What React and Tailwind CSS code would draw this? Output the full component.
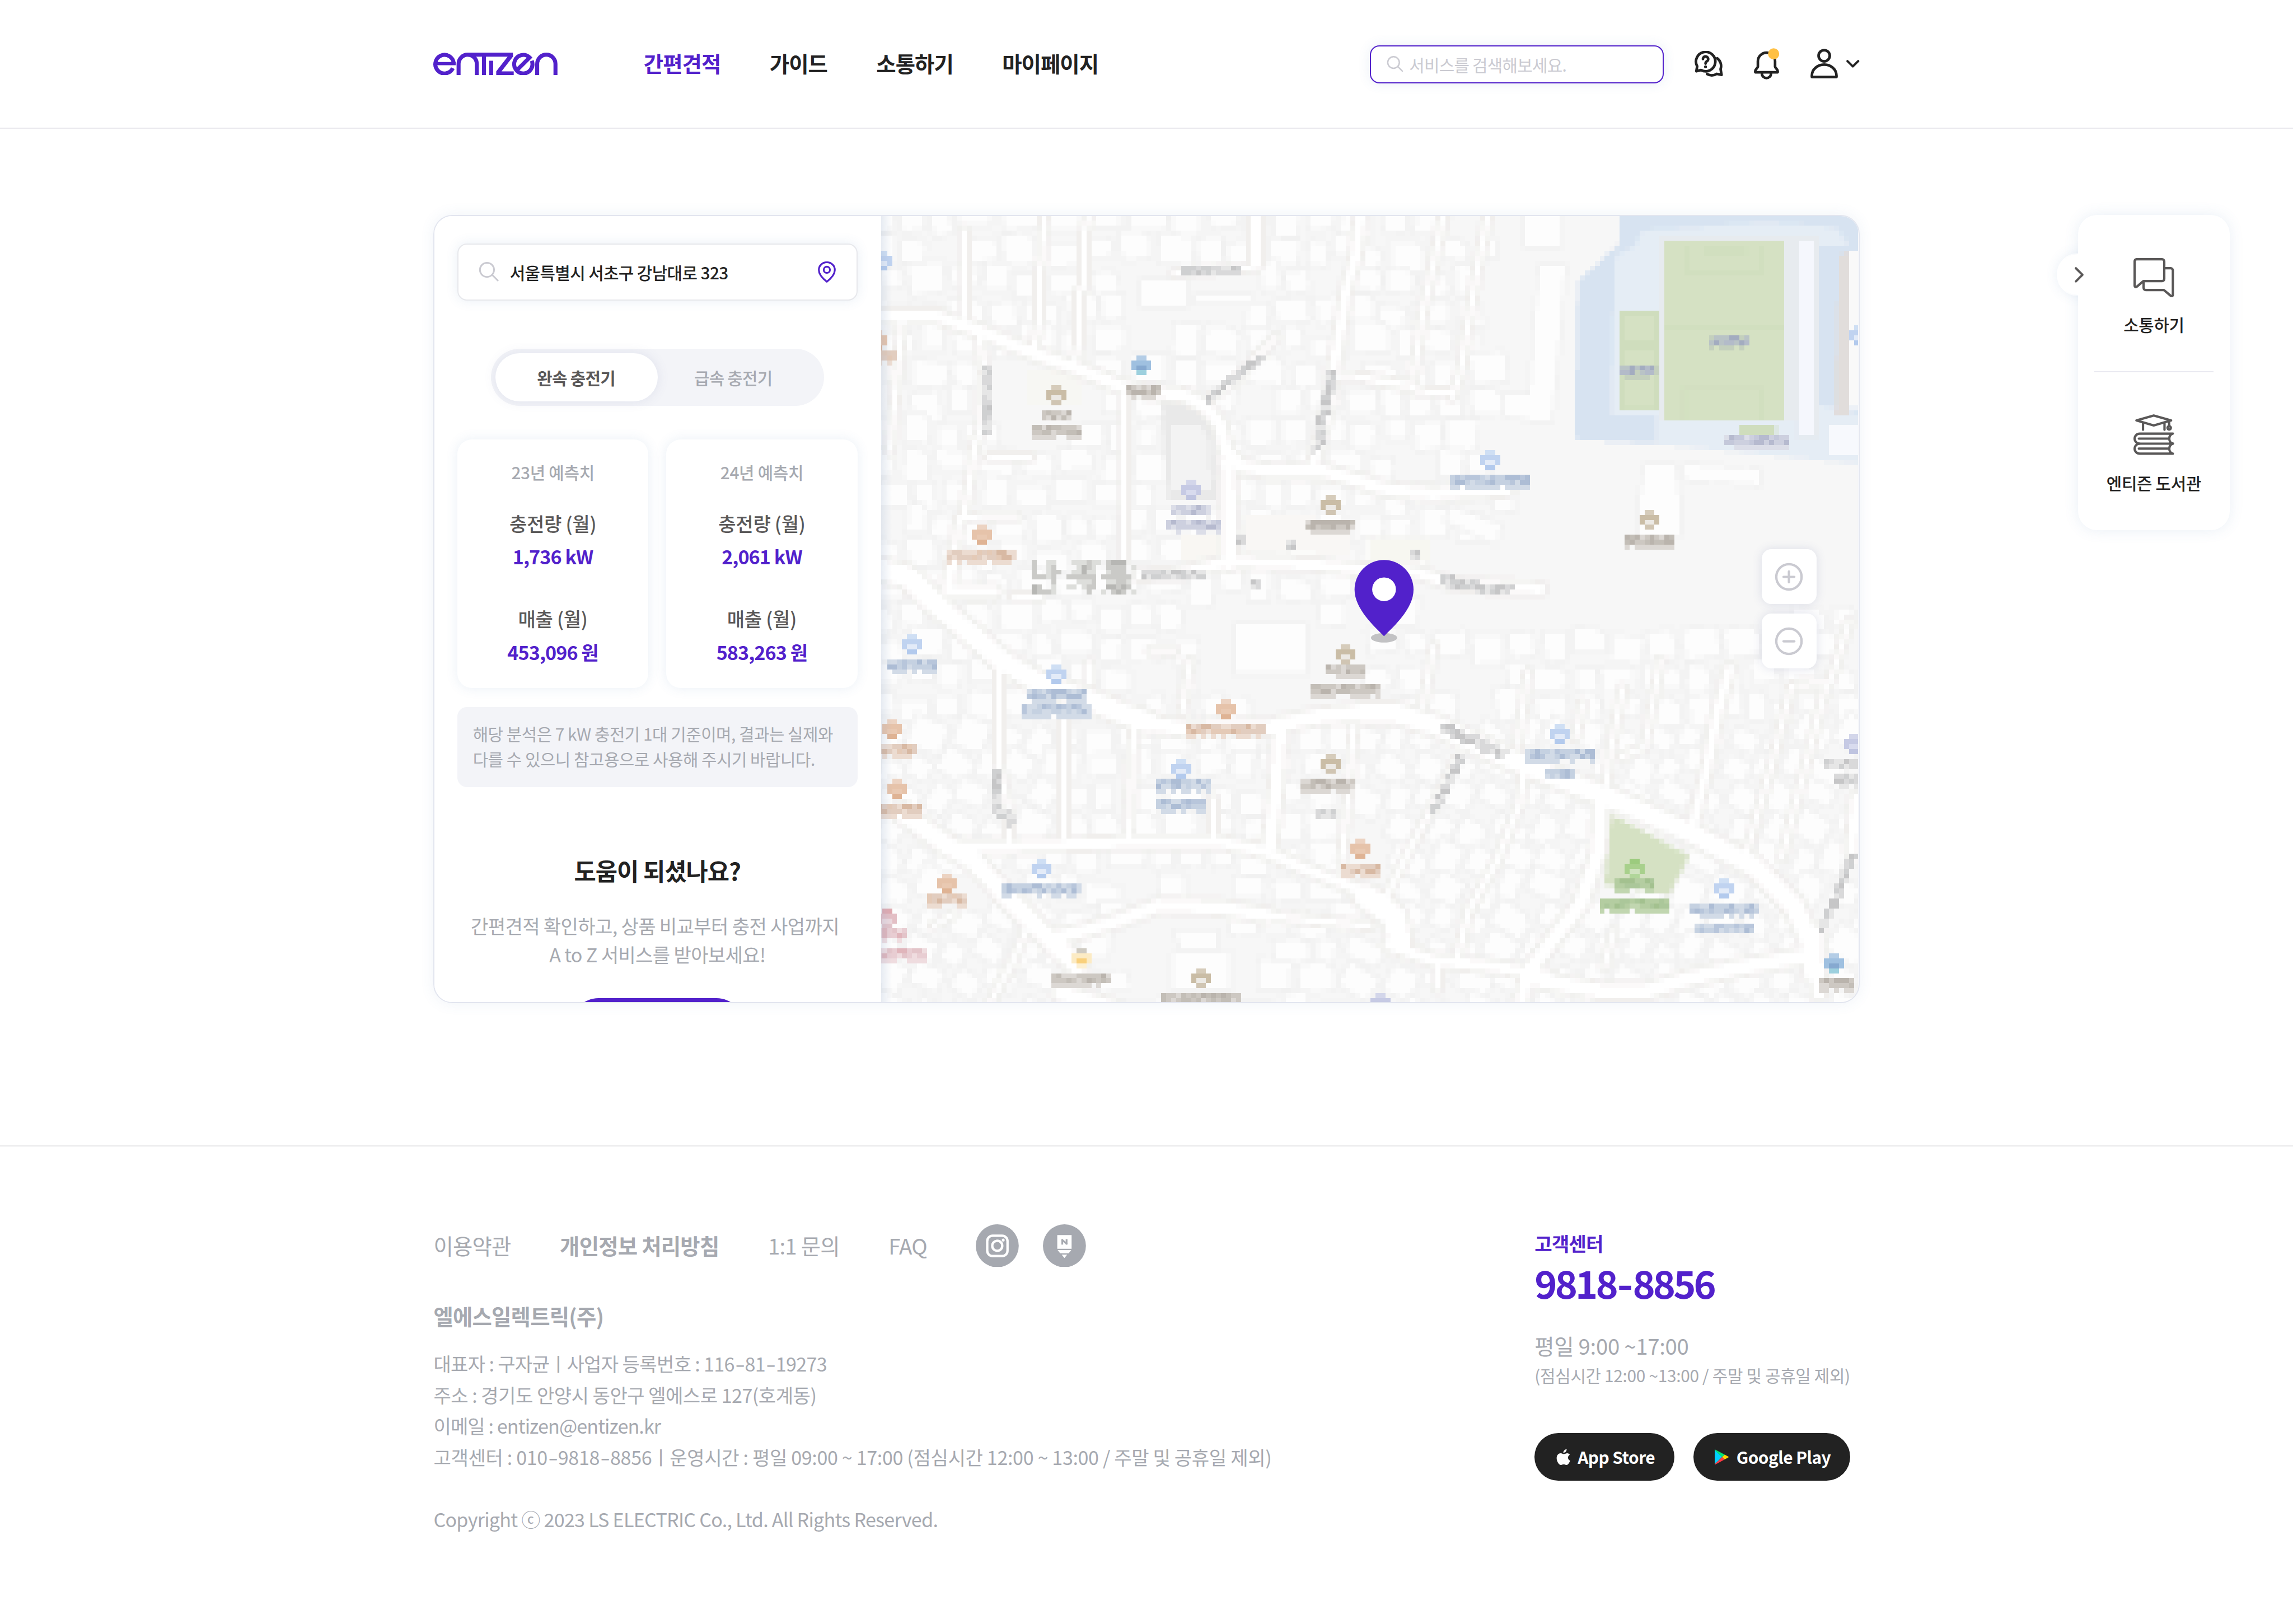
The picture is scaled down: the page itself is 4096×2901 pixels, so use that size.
import React, { useMemo } from "react";

/* ------------------------------------------------------------------ */
/* Map: a coarse mosaic of square cells, painted from vector features  */
/* ------------------------------------------------------------------ */

const COLS = 198;
const ROWS = 159;
const SUB = 3;

// Each survey sheet has its own coordinates; these turn them into cells.
const SHEETS = {
  nw: { ox: -0.31, sx: 15.83, oy: -1.786 },
  ne: { ox: 98.75, sx: 15.578, oy: -1.786 },
  sw: { ox: -0.31, sx: 15.83, oy: 78.91 },
  se: { ox: 98.75, sx: 15.578, oy: 78.91 },
};
const toCell = (sheet, [x, y]) => {
  const s = SHEETS[sheet];
  return [s.ox + x / s.sx, s.oy + y / 19.43];
};

const hex = (c) => [1, 3, 5].map((i) => parseInt(c.slice(i, i + 2), 16));

const ROADS = [
  ["nw", 2.3, [[0, 425], [190, 425], [320, 480], [500, 570], [640, 630], [790, 705], [860, 720], [980, 735], [1050, 780], [1095, 850], [1112, 950], [1160, 1010], [1250, 1030], [1420, 1030], [1568, 1078]]],
  ["ne", 2.3, [[0, 1085], [80, 1105], [200, 1118], [300, 1108], [430, 1100]]],
  ["nw", 2.6, [[1120, 990], [1125, 1390]]],
  ["nw", 1.1, [[283, 95], [283, 430]]],
  ["nw", 1.1, [[535, 30], [530, 200], [520, 240], [520, 440], [500, 570]]],
  ["nw", 1.1, [[678, 30], [662, 100], [662, 310], [647, 330], [645, 540], [630, 610]]],
  ["nw", 2, [[1208, 30], [1208, 225]]],
  ["nw", 1, [[1190, 238], [1100, 243], [950, 258]]],
  ["nw", 1.9, [[1542, 30], [1525, 200], [1495, 320], [1475, 480], [1455, 620], [1440, 760], [1390, 1010]]],
  ["nw", 1.1, [[790, 740], [790, 1370]]],
  ["nw", 1.1, [[85, 440], [75, 560], [60, 760], [45, 950]]],
  ["nw", 1.2, [[330, 510], [345, 640], [335, 860], [315, 930], [298, 1080], [280, 1210], [262, 1240], [245, 1420]]],
  ["nw", 1, [[265, 1208], [450, 1205]]],
  ["nw", 1, [[360, 975], [490, 975]]],
  ["nw", 1, [[1270, 510], [1230, 560], [1200, 600], [1130, 690], [1060, 745]]],
  ["nw", 2, [[840, 1435], [960, 1430], [1110, 1385], [1200, 1385], [1400, 1395], [1568, 1415]]],
  ["ne", 2, [[0, 1415], [150, 1425], [260, 1470], [440, 1485], [535, 1490]]],
  ["nw", 4.2, [[0, 1410], [100, 1440], [210, 1568]]],
  ["sw", 4, [[190, -20], [300, 95], [400, 200], [520, 290], [690, 360], [790, 410], [870, 445]]],
  ["sw", 2.8, [[860, 445], [990, 468], [1250, 460], [1400, 420], [1568, 400]]],
  ["nw", 2, [[243, 1390], [230, 1500], [380, 1500]]],
  ["nw", 1, [[440, 1518], [525, 1518]]],
  ["nw", 1, [[1460, 660], [1568, 665]]],
  ["ne", 1.1, [[232, 30], [200, 230], [170, 400], [140, 660]]],
  ["ne", 1.1, [[372, 30], [340, 230], [315, 420], [285, 650], [260, 740]]],
  ["ne", 1.4, [[0, 675], [140, 700]]],
  ["ne", 1, [[145, 720], [260, 725]]],
  ["sw", 1.1, [[392, 230], [392, 600], [425, 800], [425, 900]]],
  ["sw", 1.1, [[598, 440], [598, 890]]],
  ["sw", 1.1, [[820, 460], [805, 900]]],
  ["sw", 1.1, [[1073, 740], [1073, 890]]],
  ["sw", 2.4, [[1285, 460], [1272, 700], [1250, 930]]],
  ["sw", 2, [[220, 925], [450, 925], [800, 910], [1100, 910], [1240, 945], [1300, 980], [1420, 1040], [1568, 1110]]],
  ["sw", 3.6, [[80, 790], [220, 915], [310, 980], [370, 1060], [430, 1140], [520, 1250], [640, 1390]]],
  ["sw", 2.4, [[560, 1285], [660, 1255], [760, 1220], [900, 1155], [1100, 1165], [1250, 1195]]],
  ["sw", 1.3, [[1240, 1195], [1400, 1215], [1568, 1235]]],
  ["sw", 1.1, [[480, 1250], [430, 1390], [350, 1568]]],
  ["sw", 1, [[250, 1185], [185, 1235]]],
  ["sw", 3, [[590, 1500], [760, 1560]]],
  ["sw", 1.1, [[1520, 460], [1500, 740], [1480, 980]]],
  ["sw", 1.1, [[680, 210], [680, 290]]],
  ["sw", 1, [[875, 163], [950, 163]]],
  ["sw", 1, [[1000, 200], [990, 280], [975, 400]]],
  ["se", 3.8, [[-20, 405], [80, 405], [220, 460], [420, 575], [560, 645], [760, 740], [1000, 870], [1200, 1000], [1330, 1160], [1380, 1300], [1390, 1420]]],
  ["se", 4.6, [[-10, 1120], [80, 1200], [95, 1300]]],
  ["se", 2, [[60, 1310], [200, 1370], [400, 1395], [560, 1430]]],
  ["se", 2.8, [[500, 1440], [720, 1490], [870, 1490], [1000, 1440], [1150, 1400], [1380, 1350]]],
  ["se", 2.7, [[725, 730], [715, 950], [660, 1150], [500, 1410]]],
  ["se", 1.1, [[285, 560], [200, 770], [130, 930], [50, 1130]]],
  ["se", 1.2, [[483, 640], [470, 760], [400, 980], [310, 1180], [275, 1370]]],
  ["se", 1.8, [[1127, 235], [1090, 400], [1060, 600], [1010, 850]]],
  ["se", 1, [[1320, 300], [1260, 600], [1180, 950]]],
  ["se", 1, [[1430, 290], [1350, 680], [1290, 970]]],
  ["se", 1, [[793, 310], [755, 550], [740, 700]]],
  ["se", 1, [[912, 200], [860, 540], [790, 575]]],
  ["se", 1, [[665, 370], [645, 500]]],
  ["se", 1, [[1500, 50], [1440, 290], [1340, 295]]],
  ["se", 2, [[1522, 740], [1508, 950]]],
  ["se", 2.4, [[1395, 1260], [1405, 1500]]],
  ["se", 1, [[495, 250], [465, 530]]],
  ["se", 1, [[200, 150], [170, 380]]],
  ["se", 2.2, [[490, 1430], [475, 1540]]],
  ["se", 1, [[215, 1380], [215, 1480]]],
  ["se", 1, [[765, 1260], [735, 1400]]],
];

const box = (x0, y0, x1, y1) => [[x0, y0], [x1, y0], [x1, y1], [x0, y1]];

const AREAS = [
  ["nw", "#f7f6f2", box(480, 640, 650, 770)],
  ["nw", "#f8f7f3", box(970, 1280, 1110, 1380)],
  ["nw", "#f8f7f4", box(1170, 1200, 1400, 1340)],
  ["nw", "#f8f7f4", box(1400, 1280, 1510, 1355)],
  ["ne", "#f7f6f1", box(0, 1290, 190, 1380)],
  ["nw", "#e8e8e8", [[908, 751], [1010, 770], [1070, 850], [1082, 1145], [930, 1145]]],
  ["nw", "#f3f3f3", [[940, 850], [1035, 850], [1060, 920], [1065, 1105], [940, 1105]]],
  ["ne", "#d7e3f1", [[784, 30], [1540, 30], [1540, 1005], [1400, 985], [900, 925], [640, 905], [652, 290], [784, 140]]],
  ["ne", "#e5ecf5", [[850, 93], [1240, 60], [1460, 80], [1500, 150], [1408, 150], [1408, 770], [1540, 810], [1540, 1005], [900, 925], [895, 810], [755, 810], [770, 190], [830, 150]]],
  ["ne", "#e6eaee", box(908, 112, 1406, 905)],
  ["ne", "#e5ecf5", box(900, 832, 1340, 930)],
  ["ne", "#d5e1c3", box(924, 131, 1298, 830)],
  ["ne", "#d1dfbf", box(985, 150, 1235, 266)],
  ["ne", "#d5e1c3", box(1001, 150, 1220, 247)],
  ["ne", "#d1dfbf", box(1050, 150, 1175, 188)],
  ["ne", "#d1dfbf", box(975, 700, 1235, 830)],
  ["ne", "#d5e1c3", box(990, 715, 1220, 830)],
  ["ne", "#d1dfbf", box(924, 460, 1298, 480)],
  ["ne", "#cfddbd", box(784, 403, 908, 791)],
  ["ne", "#d5e1c3", box(797, 422, 893, 520)],
  ["ne", "#d5e1c3", box(797, 560, 893, 780)],
  ["ne", "#cfddbd", box(1158, 850, 1270, 930)],
  ["ne", "#f5f7fc", box(1345, 131, 1390, 888)],
  ["ne", "#e1dcda", [[1470, 190], [1500, 170], [1500, 810], [1455, 810]]],
  ["ne", "#f9f9f9", box(1500, 170, 1540, 785)],
  ["ne", "#f6f8fc", box(1438, 850, 1540, 965)],
  ["se", "#d5e1c3", [[750, 797], [1000, 960], [940, 1115], [737, 1075]]],
];

const BUILDINGS = [
  ["ne", [[535, 228], [612, 228], [595, 500], [570, 830], [510, 830], [425, 810], [425, 733], [503, 733], [520, 400]]],
  ["ne", box(488, 36, 600, 150)],
  ["ne", [[862, 1005], [955, 1005], [970, 1140], [970, 1275], [846, 1275], [846, 1140]]],
  ["ne", [[985, 1005], [1220, 1025], [1220, 1083], [985, 1060]]],
  ["ne", [[255, 1170], [410, 1240], [400, 1315], [240, 1225]]],
  ["nw", box(845, 287, 987, 383)],
  ["nw", box(1018, 345, 1190, 370)],
  ["sw", box(1145, 60, 1367, 250)],
  ["sw", [[950, 1255], [1082, 1255], [1082, 1320], [970, 1320]]],
  ["sw", box(945, 1345, 1125, 1480)],
];

// Open ground: no small houses are laid here.
const OPEN = [
  ["ne", [[400, 20], [1568, 20], [1568, 1568], [180, 1568], [180, 1380], [430, 1200], [400, 900]]],
  ["se", [[180, -20], [1380, -20], [1000, 80], [700, 110], [400, 100], [180, 90]]],
  ["se", [[180, 240], [440, 240], [440, 420], [300, 420]]],
  ["nw", [[800, 240], [1240, 250], [1210, 430], [1020, 460], [830, 640], [800, 560]]],
  ["nw", [[900, 740], [1100, 760], [1100, 1180], [910, 1180]]],
  ["nw", [[370, 600], [680, 700], [660, 960], [360, 960]]],
  ["sw", [[680, 1240], [900, 1200], [1240, 1230], [1200, 1500], [800, 1500]]],
  ["sw", [[1020, 20], [1568, 20], [1568, 400], [1200, 410], [1020, 280]]],
];

const TONES = {
  gray: ["#d9d9da", "#c6c6c7", "#e6e6e6", "#cfd0d1"],
  taupe: ["#cdc8c2", "#bab4ad", "#dcd8d4", "#c3beb7"],
  blue: ["#c5d1e1", "#b8c6db", "#d2dbe7", "#adbdd5"],
  orange: ["#e2cdbf", "#d8b9a3", "#ecdcd1", "#e4cab7"],
  indigo: ["#cdd0df", "#b6bacf", "#dcdee8", "#c4c8da"],
  field: ["#b9c3c6", "#a3acc0", "#c4d0bd", "#b3bbc9"],
  red: ["#e8cdd2", "#e0b5bb", "#efdcdf", "#e3c4c9"],
  green: ["#b4cda1", "#a3c18f", "#c1d6b0", "#abc79a"],
};

const MARKS = {
  blue: ["#cfdff4", "#c0d3f0", "#e3ebf8", "#b3caed"],
  orange: ["#ecd3c2", "#e6c3aa", "#e9c9b2", "#dfb394"],
  tan: ["#d6ccbb", "#cabda6", "#ece9e4", "#d0c5b3"],
  indigo: ["#d3d6ea", "#c6cae4", "#d8dbee", "#bfc4e0"],
  green: ["#9ccb7e", "#a8d08c", "#cfe2bf", "#b1d69a"],
  cyan: ["#b4cde6", "#9fc0e0", "#86a9d0", "#9dd0de"],
  red: ["#e0aab0", "#e3bfc5", "#ebd8dd", "#e2c3c9"],
  yellow: ["#cfcbc2", "#fcebc4", "#f9d07c", "#fdf0d2"],
};

const MARKERS = [
  ["nw", 813, 577, "cyan"], ["nw", 543, 694, "tan"], ["nw", 306, 1238, "orange"],
  ["nw", 971, 1063, "indigo"], ["nw", 1414, 1121, "tan"], ["nw", -10, 170, "blue"],
  ["nw", -25, 480, "orange"], ["ne", 347, 946, "blue"], ["ne", 846, 1180, "tan"],
  ["ne", 1500, 461, "blue"], ["sw", 83, 97, "blue"], ["sw", 543, 214, "blue"],
  ["sw", 1082, 350, "orange"], ["sw", 20, 428, "orange"], ["sw", 36, 661, "orange"],
  ["sw", 940, 583, "blue"], ["sw", 1414, 565, "tan"], ["sw", 1509, 895, "orange"],
  ["sw", 195, 1030, "orange"], ["sw", 497, 972, "blue"], ["sw", 4, 1166, "red"],
  ["sw", 622, 1321, "yellow"], ["sw", 1003, 1400, "tan"], ["sw", 1462, 136, "tan"],
  ["se", 565, 447, "blue"], ["se", 800, 972, "green"], ["se", 1080, 1050, "blue"],
  ["se", 1485, 486, "indigo"], ["se", 1423, 1340, "cyan"], ["se", 5, 1496, "indigo"],
];

// sheet, left, right, top, rows, tone
const CAPTIONS = [
  ["nw", 797, 907, 694, 3, "taupe"], ["nw", 527, 622, 790, 2, "taupe"],
  ["nw", 497, 655, 850, 3, "taupe"], ["nw", 227, 448, 1335, 3, "orange"],
  ["nw", 940, 1065, 1160, 2, "indigo"], ["nw", 923, 1097, 1219, 3, "indigo"],
  ["nw", 1367, 1525, 1219, 3, "taupe"], ["nw", 843, 1050, 1413, 2, "gray"],
  ["nw", 970, 1160, 229, 2, "gray"], ["nw", 1145, 1177, 1277, 2, "gray"],
  ["nw", 1303, 1335, 1297, 2, "gray"], ["nw", 1192, 1224, 1452, 2, "gray"],
  ["nw", 338, 370, 616, 14, "gray"], ["nw", 5, 68, 558, 3, "orange"],
  ["ne", 254, 503, 1043, 3, "blue"],
  ["ne", 800, 955, 1277, 3, "taupe"], ["ne", 1065, 1190, 500, 3, "field"],
  ["ne", 784, 908, 616, 3, "field"], ["ne", 1112, 1314, 888, 3, "indigo"],
  ["ne", 129, 161, 1335, 2, "gray"], ["sw", 36, 195, 194, 3, "blue"],
  ["sw", 480, 670, 310, 3, "blue"], ["sw", 464, 685, 369, 3, "blue"],
  ["sw", 987, 1240, 447, 3, "orange"], ["sw", 5, 132, 525, 3, "orange"],
  ["sw", 5, 148, 758, 3, "orange"], ["sw", 891, 1065, 661, 3, "blue"],
  ["sw", 891, 1050, 738, 3, "blue"], ["sw", 1351, 1525, 661, 3, "taupe"],
  ["sw", 1399, 1462, 777, 2, "gray"], ["sw", 1478, 1610, 991, 3, "orange"],
  ["sw", 163, 290, 1108, 3, "orange"], ["sw", 400, 655, 1068, 3, "blue"],
  ["sw", 5, 100, 1245, 3, "red"], ["sw", 5, 163, 1321, 3, "red"],
  ["sw", 559, 749, 1418, 3, "taupe"], ["sw", 908, 1160, 1496, 3, "taupe"],
  ["sw", 1430, 1557, 214, 3, "taupe"], ["sw", 1383, 1600, 292, 3, "taupe"],
  ["sw", 370, 402, 622, 9, "gray"], ["se", 488, 706, 544, 3, "blue"],
  ["se", 550, 642, 620, 2, "blue"], ["se", 768, 892, 1050, 3, "green"],
  ["se", 722, 940, 1127, 3, "green"], ["se", 1003, 1220, 1147, 3, "blue"],
  ["se", 1018, 1205, 1224, 2, "blue"], ["se", 1423, 1530, 583, 2, "gray"],
  ["se", 1453, 1530, 650, 3, "gray"], ["se", 1400, 1515, 1438, 3, "taupe"],
];

// The district mark, cell by cell: 1 pale, 2 mid, 3 dark.
const DISTRICT = [
  "2..11...111211.2333..",
  "2..12....1321..2222.1",
  "2..122..11311..1222..",
  "22212..222222.222222.",
  "....2....1112..11221.",
  "32..1..11.122..33232.",
  "32221......2..1.232.1",
];

// Street names that run along a slanted road.
const SLANTED = [
  ["nw", [1060, 735], [1215, 585]], ["nw", [1445, 640], [1395, 940]],
  ["ne", [223, 1450], [430, 1490]], ["se", [230, 460], [420, 560]],
  ["se", [280, 575], [205, 765]], ["se", [1500, 965], [1415, 1240]],
  ["sw", [400, 780], [425, 830]],
];

function makeRandom(seed) {
  let s = seed;
  return () => {
    s = (s * 1664525 + 1013904223) >>> 0;
    return s / 4294967296;
  };
}

function insidePolygon(x, y, pts) {
  let inside = false;
  for (let i = 0, j = pts.length - 1; i < pts.length; j = i++) {
    const [xi, yi] = pts[i];
    const [xj, yj] = pts[j];
    if (yi > y !== yj > y && x < ((xj - xi) * (y - yi)) / (yj - yi) + xi) inside = !inside;
  }
  return inside;
}

function segmentDistance(px, py, [ax, ay], [bx, by]) {
  const dx = bx - ax;
  const dy = by - ay;
  const t = Math.max(0, Math.min(1, ((px - ax) * dx + (py - ay) * dy) / (dx * dx + dy * dy || 1)));
  return Math.hypot(px - ax - t * dx, py - ay - t * dy);
}

function buildMosaic() {
  const W = COLS * SUB;
  const H = ROWS * SUB;
  const palette = ["#f6f6f6"];
  const buf = new Uint8Array(W * H);
  const colour = (c) => {
    let i = palette.indexOf(c);
    if (i < 0) i = palette.push(c) - 1;
    return i;
  };
  const paint = (x0, y0, x1, y1, c, test) => {
    const k = colour(c);
    const ya = Math.max(0, Math.floor(y0 * SUB));
    const yb = Math.min(H - 1, Math.ceil(y1 * SUB));
    const xa = Math.max(0, Math.floor(x0 * SUB));
    const xb = Math.min(W - 1, Math.ceil(x1 * SUB));
    for (let y = ya; y <= yb; y++)
      for (let x = xa; x <= xb; x++)
        if (test((x + 0.5) / SUB, (y + 0.5) / SUB)) buf[y * W + x] = k;
  };
  const fill = (pts, c) => {
    const xs = pts.map((p) => p[0]);
    const ys = pts.map((p) => p[1]);
    paint(Math.min(...xs), Math.min(...ys), Math.max(...xs), Math.max(...ys), c, (x, y) => insidePolygon(x, y, pts));
  };
  const stroke = (pts, w, c) => {
    for (let i = 1; i < pts.length; i++) {
      const a = pts[i - 1];
      const b = pts[i];
      paint(Math.min(a[0], b[0]) - w, Math.min(a[1], b[1]) - w, Math.max(a[0], b[0]) + w, Math.max(a[1], b[1]) + w, c,
        (x, y) => segmentDistance(x, y, a, b) <= w / 2);
    }
  };
  const building = (pts) => {
    stroke([...pts, pts[0]], 1.2, "#f1f1f1");
    fill(pts, "#fcfcfc");
  };

  const rnd = makeRandom(20231);
  const open = OPEN.map(([s, pts]) => pts.map((p) => toCell(s, p)));
  for (let gy = 0; gy < 27; gy++) {
    let cx = -2 + rnd() * 4;
    while (cx < COLS) {
      const w = 1.7 + rnd() * 1.9;
      const h = 1.8 + rnd() * 1.3;
      cx += w;
      const cy = gy * 6.1 + 1 + (rnd() - 0.5) * 2.4;
      const diagonal = cy > 100 && (cx > 95 || cx < 34);
      const a = diagonal ? 0.35 + rnd() * 0.3 : (rnd() - 0.5) * 0.3;
      const x0 = cx;
      cx += w + 1.1 + rnd() * 1.3;
      if (open.some((o) => insidePolygon(x0, cy, o)) || rnd() < 0.05) continue;
      const ca = Math.cos(a);
      const sa = Math.sin(a);
      const notch = rnd() < 0.35 ? 0.5 : 0.95;
      building([[-w, -h], [w * notch, -h], [w, -h * notch], [w, h * 0.9], [-w * 0.9, h]].map(([x, y]) => [x0 + x * ca - y * sa, cy + x * sa + y * ca]));
    }
  }
  BUILDINGS.forEach(([s, pts]) => building(pts.map((p) => toCell(s, p))));
  AREAS.forEach(([s, c, pts]) => fill(pts.map((p) => toCell(s, p)), c));
  const roads = ROADS.map(([s, w, pts]) => [w, pts.map((p) => toCell(s, p))]);
  roads.forEach(([w, pts]) => stroke(pts, w + 1.7, "#f0efed"));
  roads.forEach(([w, pts]) => stroke(pts, w, "#ffffff"));

  // Average the sub-samples of every cell.
  const rgb = palette.map(hex);
  const cells = [];
  for (let r = 0; r < ROWS; r++) {
    for (let c = 0; c < COLS; c++) {
      const sum = [0, 0, 0];
      for (let j = 0; j < SUB; j++)
        for (let i = 0; i < SUB; i++) {
          const v = rgb[buf[(r * SUB + j) * W + c * SUB + i]];
          for (let n = 0; n < 3; n++) sum[n] += v[n];
        }
      const q = sum.map((v) => Math.min(255, Math.floor(v / (SUB * SUB) / 2) * 2 + 1));
      cells.push(`rgb(${q.join(",")})`);
    }
  }
  const put = (c, r, v) => {
    if (c >= 0 && c < COLS && r >= 0 && r < ROWS) cells[r * COLS + c] = v;
  };

  CAPTIONS.forEach(([s, x0, x1, y, rows, tone]) => {
    const [c0, r0] = toCell(s, [x0, y]).map(Math.round);
    const c1 = Math.round(toCell(s, [x1, y])[0]);
    const t = TONES[tone];
    for (let r = 0; r < rows; r++)
      for (let c = c0; c < c1; c++) {
        const last = rows === 3 && r === 2;
        if (last && rnd() < 0.3) continue;
        const v = rnd();
        put(c, r0 + r, last ? t[2] : v < 0.4 ? t[0] : v < 0.6 ? t[1] : v < 0.82 ? t[2] : t[3]);
      }
  });
  DISTRICT.forEach((row, r) => {
    const [c0, r0] = toCell("nw", [497, 1375]).map(Math.round);
    [...row].forEach((k, c) => {
      if (k !== ".") put(c0 + c, r0 + r, ["#dddedb", "#cacac7", "#b7b7b4"][k - 1]);
    });
  });
  SLANTED.forEach(([s, a, b]) => {
    const p = toCell(s, a);
    const q = toCell(s, b);
    const n = Math.ceil(Math.max(Math.abs(q[0] - p[0]), Math.abs(q[1] - p[1])));
    for (let i = 0; i <= n; i++) {
      const c = Math.floor(p[0] + ((q[0] - p[0]) * i) / n);
      const r = Math.floor(p[1] + ((q[1] - p[1]) * i) / n);
      put(c, r, TONES.gray[Math.floor(rnd() * 4)]);
      put(c + 1, r, TONES.gray[Math.floor(rnd() * 4)]);
      put(c, r + 1, TONES.gray[Math.floor(rnd() * 4)]);
    }
  });
  MARKERS.forEach(([s, x, y, tone]) => {
    const [c, r] = toCell(s, [x, y]).map(Math.round);
    const m = MARKS[tone];
    [1, 2].forEach((i) => put(c + i, r, m[0]));
    [0, 1, 2, 3].forEach((i) => put(c + i, r + 1, m[1]));
    [0, 3].forEach((i) => put(c + i, r + 2, m[1]));
    [1, 2].forEach((i) => put(c + i, r + 2, m[2]));
    [1, 2].forEach((i) => put(c + i, r + 3, m[3]));
  });

  const paths = {};
  for (let r = 0; r < ROWS; r++) {
    let start = 0;
    for (let c = 1; c <= COLS; c++) {
      const v = cells[r * COLS + start];
      if (c === COLS || cells[r * COLS + c] !== v) {
        const n = c - start;
        paths[v] = (paths[v] || "") + `M${start} ${r}h${n}v1h-${n}z`;
        start = c;
      }
    }
  }
  return Object.entries(paths);
}

function MapMosaic() {
  const layers = useMemo(buildMosaic, []);
  return (
    <svg className="block h-full w-full" viewBox="0.807 0.05 196.04 157.7" preserveAspectRatio="none" shapeRendering="crispEdges">
      {layers.map(([fill, d]) => (
        <path key={fill} fill={fill} d={d} />
      ))}
    </svg>
  );
}

/* ------------------------------------------------------------------ */
/* Icons                                                               */
/* ------------------------------------------------------------------ */

function Logo() {
  return (
    <svg className="h-19 w-104" viewBox="0 0 312.4 57" fill="none" stroke="#5221cb" strokeWidth="10">
      <path d="M5.300 27.700H56.300" strokeWidth="8" />
      <path d="M51.400 27A23.200 23.400 0 1 0 49.200 39" />
      <path d="M63.600 57V28.500A23 23.500 0 0 1 86.600 5H200.300" />
      <path d="M86.600 5A22.800 23.500 0 0 1 109.400 28.500V57M127.500 5V57M145.600 20.300V57" />
      <path d="M187 10V5H200.300V10.300L171.600 47H202.300V57H158.300V47Z" fill="#5221cb" stroke="none" />
      <path d="M247.800 20.500A23 23.300 0 1 1 242.300 12.200L212.500 42" />
      <path d="M261.300 57V28.500A23 23.500 0 0 1 307.300 28.500V57" />
    </svg>
  );
}

function SearchIcon({ className }) {
  return (
    <svg className={className} viewBox="0 0 17 17" fill="none" stroke="#cacad1" strokeWidth="1.4" strokeLinecap="round">
      <circle cx="7" cy="6.600" r="5.900" />
      <path d="M11.300 10.800L16 15.500" />
    </svg>
  );
}

function HelpChatIcon() {
  return (
    <svg className="h-22 w-24" viewBox="0 0 24 22" fill="none" stroke="#222" strokeWidth="2.200" strokeLinecap="round" strokeLinejoin="round">
      <path d="M2.200 12.800A8.100 8.100 0 1 1 5.400 16L1.500 17L2.200 12.800Z" />
      <path d="M19 6.200A8 8 0 0 1 21.800 15.200L22.600 20L18.600 19.200A8 8 0 0 1 10.500 19.300" />
      <path d="M7 6.800A2.200 2.200 0 1 1 10.300 8.700C9.500 9.200 9.200 9.600 9.200 10.600" />
      <circle cx="9.200" cy="13.300" r=".6" fill="#222" strokeWidth="1.300" />
    </svg>
  );
}

function BellIcon() {
  return (
    <svg className="h-26 w-22" viewBox="0 0 22 26" fill="none" stroke="#222" strokeWidth="2.200" strokeLinejoin="round">
      <path d="M3.800 15.500V11A7.200 7.200 0 0 1 18.200 11V15.500C18.200 16.600 20.400 17.700 20.400 19.200V20.200H1.600V19.200C1.600 17.700 3.800 16.600 3.800 15.500Z" />
      <path d="M7.200 20.500V21.500A3.800 3.500 0 0 0 14.800 21.500V20.500" />
      <circle cx="17" cy="4.800" r="4.700" fill="#ffc043" stroke="none" />
    </svg>
  );
}

function UserIcon() {
  return (
    <svg className="h-25 w-23" viewBox="0 0 23 25" fill="none" stroke="#222" strokeWidth="2.200" strokeLinejoin="round">
      <circle cx="11.500" cy="5.900" r="4.700" />
      <path d="M1.200 23.700V22.500A10.300 9.200 0 0 1 21.800 22.500V23.700Z" />
    </svg>
  );
}

function TalkIcon() {
  return (
    <svg className="h-33 w-34" viewBox="0 0 34 33" fill="none" stroke="#5a5858" strokeWidth="1.950" strokeLinejoin="round">
      <path d="M2.500 1H24A1.800 1.800 0 0 1 25.800 2.800V17.500A1.800 1.800 0 0 1 24 19.300H8.300L2.800 24C2 24.600 1 24.300 1 23.300V2.800A1.800 1.800 0 0 1 2.500 1Z" />
      <path d="M25.800 8.500H31.200A1.800 1.800 0 0 1 33 10.300V31C33 32 32 32.300 31.200 31.600L25.500 26.800H10.300A1.800 1.800 0 0 1 8.500 25V19.300" />
    </svg>
  );
}

function LibraryIcon() {
  return (
    <svg className="h-34 w-34" viewBox="0 0 34 34" fill="none" stroke="#5a5858" strokeWidth="1.950" strokeLinecap="round" strokeLinejoin="round">
      <path d="M2.500 5.200L17 1L31.500 5.200L17 9.400Z" />
      <path d="M8 7.200V13M26 7.200V13M29.900 5.800V9.500" />
      <circle cx="29.900" cy="11.400" r="1.400" />
      <path d="M33 16.200H5.200A4.200 4.200 0 0 0 5.200 24.600H33M33 16.200C29 17.500 29 23.500 33 24.600M4.500 20.400H29.500" />
      <path d="M5.200 24.600A4.200 4.200 0 0 0 5.200 33H33M33 24.600C29 26 29 32 33 33M4.500 28.800H29.500" />
    </svg>
  );
}

function MapPinIcon() {
  return (
    <svg className="h-18 w-15" viewBox="0 0 15 18" fill="none" stroke="#5221cb" strokeWidth="1.500" strokeLinejoin="round">
      <path d="M7.500 17C5 15 .8 11 .8 7.100A6.700 6.400 0 0 1 14.200 7.100C14.200 11 10 15 7.500 17Z" />
      <circle cx="7.500" cy="7" r="2.600" />
    </svg>
  );
}

function ZoomIcon({ plus }) {
  return (
    <svg className="size-24" viewBox="0 0 24 24" fill="none" stroke="#cacad1" strokeWidth="2" strokeLinecap="round">
      <circle cx="12" cy="12" r="10.600" />
      <path d={plus ? "M7.500 12H16.500M12 7.500V16.500" : "M7.500 12H16.500"} />
    </svg>
  );
}

function Pin() {
  return (
    <svg className="block h-70 w-50" viewBox="0 0 50 70">
      <ellipse cx="25" cy="65.300" rx="11" ry="4" fill="#c2c2c4" />
      <path d="M25 64C17 56 .3 41 .3 25A24.700 24.900 0 0 1 49.700 25C49.700 41 33 56 25 64Z" fill="#5221cb" />
      <circle cx="25" cy="24.700" r="9.950" fill="#fff" />
    </svg>
  );
}

function InstagramIcon() {
  return (
    <svg className="size-36" viewBox="0 0 36 36" fill="none" stroke="#fff" strokeWidth="2">
      <circle cx="18" cy="18" r="18" fill="#a6a9b0" stroke="none" />
      <rect x="9.600" y="9.600" width="17" height="17" rx="4.500" />
      <circle cx="18" cy="18" r="4.200" />
      <circle cx="23" cy="13.200" r="1.200" fill="#fff" stroke="none" />
    </svg>
  );
}

function NaverPostIcon() {
  return (
    <svg className="size-36" viewBox="0 0 36 36">
      <circle cx="18" cy="18" r="18" fill="#a6a9b0" />
      <path d="M12 9H24V20.500H12ZM12.300 21.600H23.700L21.600 24.300H14.400ZM15.700 25.400H20.300L18 28.300Z" fill="#fff" />
      <path d="M16.200 17V12.400M19.800 17V12.400M15.700 12.700L20.300 16.700" fill="none" stroke="#a6a9b0" strokeWidth="1.500" />
    </svg>
  );
}

function AppleIcon() {
  return (
    <svg className="h-14 w-12" viewBox="0 0 12 14" fill="#fff">
      <path d="M8.700 0.300C8.800 1.900 7.500 3.400 5.900 3.400C5.800 1.900 7.100 .5 8.700 .3ZM11.300 4.900C9.100 6.300 9.500 9.100 11.600 10C11 11.800 9.700 13.600 8.600 13.600C7.600 13.600 7.300 13 6.200 13C5.100 13 4.700 13.600 3.800 13.600C2.300 13.600 .3 10.700 .3 7.900C.3 5.200 2 3.800 3.700 3.800C4.800 3.800 5.500 4.500 6.300 4.500C7.100 4.500 7.900 3.700 9.200 3.700C10 3.700 10.900 4.200 11.300 4.900Z" />
    </svg>
  );
}

function PlayIcon() {
  return (
    <svg className="h-13 w-12" viewBox="0 0 12 13">
      <path d="M0 .4V12.600L6.200 6.500Z" fill="#00d0ff" />
      <path d="M0 0L8.400 4.500L6.200 6.500L0 .6Z" fill="#00e676" />
      <path d="M0 13L8.400 8.500L6.200 6.500L0 12.400Z" fill="#ff3a44" />
      <path d="M8.400 4.500L12 6.500L8.400 8.500L6.200 6.500Z" fill="#ffd400" />
    </svg>
  );
}

/* ------------------------------------------------------------------ */
/* Page                                                                */
/* ------------------------------------------------------------------ */

function Header() {
  return (
    <header className="flex h-108 justify-center border-b-[2px] border-[#e9e8ee]">
      <div className="flex h-107 w-1194 items-center">
        <Logo />
        <nav className="-mt-1 ml-72 flex gap-41 text-[38.4px] leading-26 font-bold tracking-[-0.025em] text-[#222]">
          <a className="text-[#5221cb]">간편견적</a>
          <a>가이드</a>
          <a>소통하기</a>
          <a>마이페이지</a>
        </nav>
        <div className="mt-1 ml-auto flex h-32 w-246 items-center rounded-[17px] border-[2px] border-[#5221cb] bg-white pl-13 shadow-[0_0_21px_rgba(75,125,182,0.12)]">
          <SearchIcon className="size-14" />
          <span className="ml-5 text-[29.87px] leading-20 tracking-[-0.025em] text-[#cacad1]">서비스를 검색해보세요.</span>
        </div>
        <div className="ml-26 flex items-center">
          <HelpChatIcon />
          <span className="ml-25">
            <BellIcon />
          </span>
          <span className="ml-26">
            <UserIcon />
          </span>
          <svg className="ml-7 h-7 w-11" viewBox="0 0 11 7" fill="none" stroke="#222" strokeWidth="1.800" strokeLinecap="round" strokeLinejoin="round">
            <path d="M1 1L5.500 5.500L10 1" />
          </svg>
        </div>
      </div>
    </header>
  );
}

function Forecast({ year, amount, sales }) {
  return (
    <div className="flex h-208 w-160 flex-col items-center rounded-[26px] bg-white pt-17 text-[34.13px] leading-24 text-[#5a5858] shadow-[0_0_21px_rgba(75,125,182,0.12)]">
      <span className="text-[29.87px] leading-21 font-medium text-[#a6a9b0]">{year}년 예측치</span>
      <span className="mt-20 font-medium">충전량 (월)</span>
      <span className="mt-4 font-bold tracking-[-0.028em] text-[#5221cb]">{amount} kW</span>
      <span className="mt-28 font-medium">매출 (월)</span>
      <span className="mt-4 font-bold tracking-[-0.028em] text-[#5221cb]">{sales} 원</span>
    </div>
  );
}

function Panel() {
  return (
    <section className="relative z-10 flex h-658 w-374 flex-col items-center overflow-hidden bg-white pt-23 pr-1">
      <div className="flex h-48 w-335 shrink-0 items-center rounded-[17px] border-[2px] border-[#e7e8ec] bg-white pr-17 pl-17 shadow-[0_0_21px_rgba(75,125,182,0.12)]">
        <SearchIcon className="size-17" />
        <span className="ml-9 text-[29.87px] leading-20 font-medium tracking-[-0.02em] text-[#222]">서울특별시 서초구 강남대로 323</span>
        <span className="ml-auto">
          <MapPinIcon />
        </span>
      </div>
      <div className="mt-40 flex h-48 w-279 shrink-0 items-center rounded-full bg-[#f3f4f8] pl-4 text-[29.87px] leading-21">
        <span className="flex h-40 w-136 items-center justify-center rounded-full bg-white pr-1 font-bold tracking-[-0.025em] text-[#5a5858] shadow-[0_0_21px_rgba(90,100,160,0.12)]">완속 충전기</span>
        <span className="w-126 text-center font-medium tracking-[-0.025em] text-[#a6a9b0]">급속 충전기</span>
      </div>
      <div className="mt-28 flex w-335 shrink-0 justify-between">
        <Forecast year="23" amount="1,736" sales="453,096" />
        <Forecast year="24" amount="2,061" sales="583,263" />
      </div>
      <p className="mt-16 h-67 w-335 shrink-0 rounded-[17px] bg-[#f3f4f8] px-13 pt-12 text-[29.87px] leading-21 tracking-[-0.017em] whitespace-nowrap text-[#a6a9b0]">
        해당 분석은 7 kW 충전기 1대 기준이며, 결과는 실제와
        <br />
        다를 수 있으니 참고용으로 사용해 주시기 바랍니다.
      </p>
      <h2 className="mt-55 shrink-0 text-[42.67px] leading-30 font-bold tracking-[-0.023em] text-[#222]">도움이 되셨나요?</h2>
      <p className="mt-19 shrink-0 text-center text-[34.13px] leading-24 tracking-[-0.02em] text-[#a6a9b0]">
        <span className="pr-4">간편견적 확인하고, 상품 비교부터 충전 사업까지</span>
        <br />A to Z 서비스를 받아보세요!
      </p>
      <div className="mt-25 h-45 w-144 shrink-0 rounded-full bg-[#5221cb]" />
    </section>
  );
}

function ZoomButton({ plus }) {
  return (
    <button className="flex size-46 items-center justify-center rounded-[17px] bg-white shadow-[0_0_17px_rgba(75,90,150,0.16)]">
      <ZoomIcon plus={plus} />
    </button>
  );
}

function MapView() {
  return (
    <section className="relative h-658 w-818 overflow-hidden bg-[#f5f5f5]">
      <MapMosaic />
      <div className="absolute inset-y-0 left-0 w-9 bg-linear-to-r from-[#8fa6c8]/20 to-transparent" />
      <div className="absolute top-288 left-396">
        <Pin />
      </div>
      <div className="absolute top-279 left-737 flex flex-col gap-8">
        <ZoomButton plus />
        <ZoomButton />
      </div>
    </section>
  );
}

function QuickMenu() {
  return (
    <aside className="relative ml-183 h-264 w-127">
      <div className="absolute top-32 -left-18 size-36 rounded-full bg-white shadow-[0_0_21px_rgba(75,125,182,0.12)]" />
      <div className="relative flex h-264 w-127 flex-col items-center rounded-[34px] bg-white text-[29.87px] leading-21 font-medium text-[#222] shadow-[0_0_26px_rgba(75,125,182,0.12)]">
        <span className="mt-36">
          <TalkIcon />
        </span>
        <span className="mt-12">소통하기</span>
        <span className="mt-29 h-[2px] w-100 bg-[#e9e9f1]" />
        <span className="mt-35">
          <LibraryIcon />
        </span>
        <span className="mt-13">엔티즌 도서관</span>
      </div>
      <div className="absolute top-33 -left-17 flex h-34 w-36 items-center justify-center rounded-full bg-white">
        <svg className="h-14 w-9" viewBox="0 0 9 14" fill="none" stroke="#5a5858" strokeWidth="1.900" strokeLinecap="round" strokeLinejoin="round">
          <path d="M1.500 1.500L7 7L1.500 12.500" />
        </svg>
      </div>
    </aside>
  );
}

function Divider() {
  return <span className="[word-spacing:-0.2em]">{" ㅣ "}</span>;
}

function Hyphen() {
  return <span className="mx-[0.11em] inline-block scale-x-150">-</span>;
}

function Footer() {
  return (
    <footer className="flex h-401 justify-center border-t-[2px] border-[#e8e8ea] text-[#a6a9b0]">
      <div className="flex w-1194 justify-between pr-8">
        <div>
          <div className="mt-65 flex h-36 items-center gap-41 text-[38.4px] leading-26 tracking-[-0.02em]">
            <a>이용약관</a>
            <a className="font-bold">개인정보 처리방침</a>
            <a>1:1 문의</a>
            <a>FAQ</a>
            <div className="flex gap-20">
              <InstagramIcon />
              <NaverPostIcon />
            </div>
          </div>
          <p className="mt-28 text-[38.4px] leading-26 font-bold tracking-[-0.02em]">엘에스일렉트릭(주)</p>
          <div className="mt-14 text-[34.13px] leading-26">
            <p className="tracking-[-0.02em]">
              대표자 : 구자균
              <Divider />
              사업자 등록번호 : 116
              <Hyphen />
              81
              <Hyphen />
              19273
            </p>
            <p className="tracking-[-0.016em]">주소 : 경기도 안양시 동안구 엘에스로 127(호계동)</p>
            <p className="tracking-[-0.027em]">이메일 : entizen@entizen.kr</p>
            <p className="tracking-[-0.011em]">
              고객센터 : 010
              <Hyphen />
              9818
              <Hyphen />
              8856
              <Divider />
              운영시간 : 평일 09:00 ~ 17:00 (점심시간 12:00 ~ 13:00 / 주말 및 공휴일 제외)
            </p>
            <p className="mt-26 tracking-[-0.022em]">Copyright ⓒ 2023 LS ELECTRIC Co., Ltd. All Rights Reserved.</p>
          </div>
        </div>
        <div className="w-264">
          <p className="mt-69 text-[34.13px] leading-24 font-bold tracking-[-0.025em] text-[#5221cb]">고객센터</p>
          <p className="-mt-1 text-[68.27px] leading-44 font-bold tracking-[-0.057em] text-[#5221cb]">
            9818
            <span className="mr-[0.08em] ml-[0.04em] inline-block scale-x-115">-</span>
            8856
          </p>
          <p className="mt-18 text-[38.4px] leading-26">평일 9:00 ~17:00</p>
          <p className="mt-1 text-[29.87px] leading-21 whitespace-nowrap">(점심시간 12:00 ~13:00 / 주말 및 공휴일 제외)</p>
          <div className="mt-38 flex gap-16 text-[29.87px] leading-20 font-bold tracking-[-0.018em] text-white">
            <span className="flex h-40 w-117 items-center rounded-full bg-[#222] pl-18">
              <AppleIcon />
              <span className="ml-6">App Store</span>
            </span>
            <span className="flex h-40 w-131 items-center rounded-full bg-[#222] pl-18">
              <PlayIcon />
              <span className="ml-6">Google Play</span>
            </span>
          </div>
        </div>
      </div>
    </footer>
  );
}

export default function App() {
  return (
    <div className="h-[2901px] w-[4096px] overflow-hidden bg-white font-['Noto_Sans_CJK_KR',sans-serif] tracking-[-0.32px] [--spacing:2.133333px]">
      <Header />
      <main className="flex h-851 pt-72">
        <div className="ml-363 flex h-660 w-1194 shrink-0 overflow-hidden rounded-[34px] border-[2px] border-[#e2e5ef] shadow-[0_0_26px_rgba(75,125,182,0.09)]">
          <Panel />
          <MapView />
        </div>
        <QuickMenu />
      </main>
      <Footer />
    </div>
  );
}
